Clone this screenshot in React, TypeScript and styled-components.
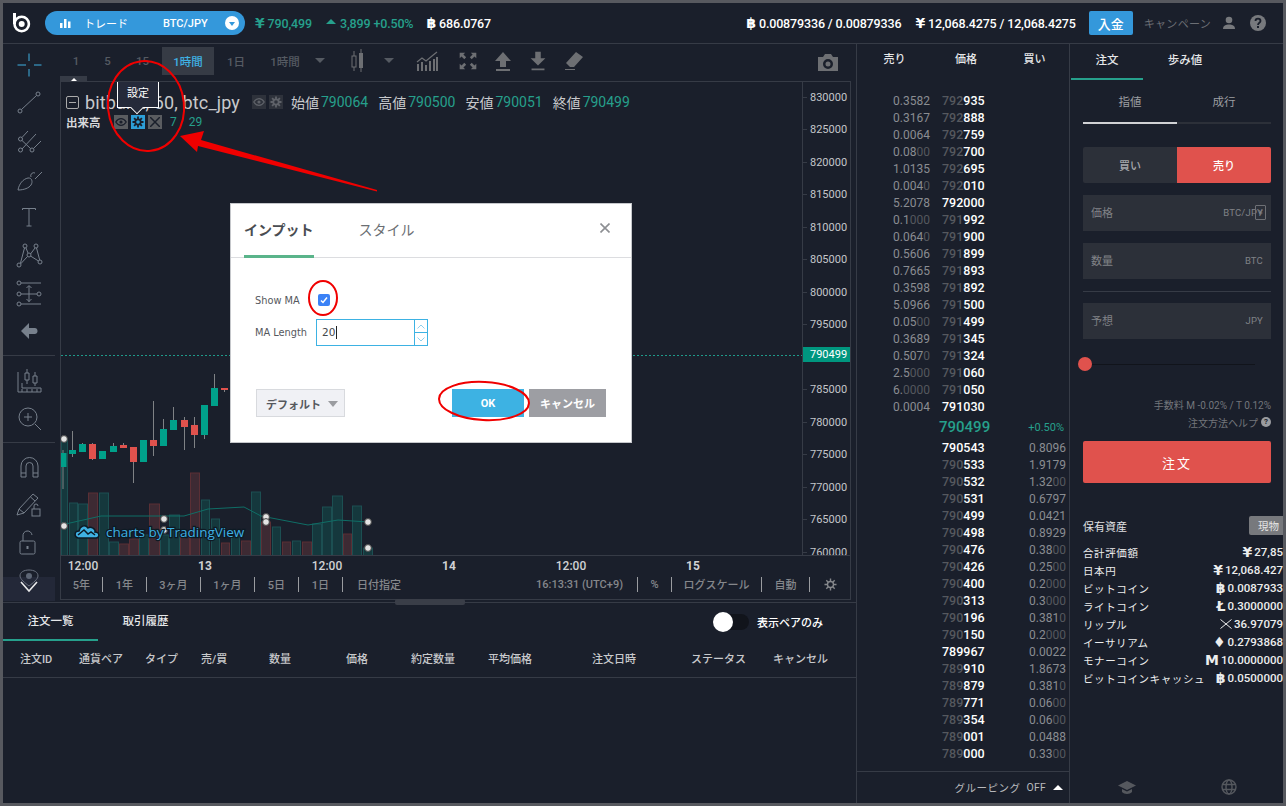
import React from 'react';
import styled, { createGlobalStyle } from 'styled-components';

const GREEN = '#26a08c';
const RED = '#e0524d';
const BLUE = '#3498db';
const LINE = '#363b46';
const BG = '#1a1f2b';
const ICON = '#77808c';

const GlobalStyle = createGlobalStyle`
  html, body {
    margin: 0;
    padding: 0;
    background: ${BG};
  }
  * {
    box-sizing: border-box;
  }
  body {
    font-family: Roboto, "Noto Sans CJK JP", sans-serif;
    color: #fff;
  }
`;

const Frame = styled.div`
  position: relative;
  width: 1286px;
  height: 806px;
  border: 3px solid #57595f;
  background: ${BG};
  overflow: hidden;
`;

/* header */
const Header = styled.header`
  height: 41px;
  border-bottom: 1px solid ${LINE};
  display: flex;
  align-items: center;
  padding-left: 8px;
`;

const Logo = styled.svg`
  width: 22px;
  height: 24px;
  margin-right: 12px;
  flex: none;
`;

const Pill = styled.div`
  width: 200px;
  height: 24px;
  border-radius: 12px;
  background: ${BLUE};
  display: flex;
  align-items: center;
  padding: 0 6px 0 14px;
  font-size: 11px;
  color: #fff;
`;

const PillLabel = styled.span`
  margin-left: 13px;
  width: 79px;
`;

const PillPair = styled.span`
  flex: 1;
  font-size: 11px;
  font-weight: 500;
`;

const PillArrow = styled.span`
  width: 14px;
  height: 14px;
  border-radius: 50%;
  background: #fff;
  display: flex;
  align-items: center;
  justify-content: center;
  &::after {
    content: '';
    border: 3.5px solid transparent;
    border-top: 4px solid ${BLUE};
    margin-top: 4px;
  }
`;

const Stat = styled.span<{ $color?: string; $left: number }>`
  margin-left: ${(p) => p.$left}px;
  font-size: 12.5px;
  letter-spacing: -0.15px;
  font-weight: 500;
  color: ${(p) => p.$color || '#fff'};
  white-space: nowrap;
  display: inline-flex;
  align-items: center;
  gap: 3px;
`;

const Coin = styled.span`
  font-family: "DejaVu Sans", sans-serif;
  font-weight: 700;
  font-size: 14px;
  line-height: 1;
`;

const UpArrow = styled.span`
  border: 5px solid transparent;
  border-bottom: 5px solid ${GREEN};
  border-top: 0;
  margin-right: 1px;
  margin-top: -3px;
`;

const HeaderRight = styled.div`
  margin-left: auto;
  display: flex;
  align-items: center;
  padding-right: 17px;
`;

const DepositButton = styled.button`
  width: 44px;
  height: 24px;
  margin-left: 13px;
  border: 0;
  border-radius: 2px;
  background: ${BLUE};
  color: #fff;
  font: 500 13px Roboto, "Noto Sans CJK JP", sans-serif;
  padding: 0;
`;

const Campaign = styled.span`
  margin-left: 11px;
  font-size: 11px;
  letter-spacing: 0.3px;
  color: #6b6e74;
`;

const HeadIcon = styled.svg<{ $left: number }>`
  margin-left: ${(p) => p.$left}px;
  width: 16px;
  height: 16px;
  flex: none;
`;

/* page body */
const Body = styled.div`
  display: flex;
  height: 759px;
`;

const LeftPane = styled.div`
  width: 853px;
  flex: none;
  display: flex;
  flex-direction: column;
`;

const ChartArea = styled.section`
  height: 559px;
  flex: none;
  display: flex;
  border-bottom: 1px solid ${LINE};
`;

const Rail = styled.nav`
  width: 57px;
  flex: none;
  display: flex;
  flex-direction: column;
  padding-top: 2px;
`;

const RailGroup = styled.div`
  width: 52px;
  padding-bottom: 5px;
  border-bottom: 1px solid ${LINE};
  margin-bottom: 5px;
  &:nth-of-type(3) {
    border-bottom: 0;
    margin-bottom: 0;
    padding-bottom: 0;
  }
`;

const RailItem = styled.div`
  height: 38px;
  display: flex;
  align-items: center;
  justify-content: center;
`;

const RailFoot = styled.div`
  width: 52px;
  height: 24px;
  margin-top: auto;
  margin-bottom: 1px;
  background: #232838;
  display: flex;
  justify-content: center;
  position: relative;
`;

const RailSvg = styled.svg`
  width: 28px;
  height: 28px;
  fill: none;
  stroke: ${ICON};
  stroke-width: 1;
  overflow: visible;
`;

const FootSvg = styled(RailSvg)`
  margin-top: -8px;
`;

const ChartColumn = styled.div`
  width: 791px;
  flex: none;
  display: flex;
  flex-direction: column;
  height: 556px;
`;

const Toolbar = styled.div`
  height: 37px;
  flex: none;
  display: flex;
  align-items: center;
`;

const ToolCell = styled.div<{ $w: number; $active?: boolean }>`
  width: ${(p) => p.$w}px;
  height: 28px;
  margin-top: -4px;
  flex: none;
  display: flex;
  align-items: center;
  justify-content: center;
  font-size: 11.5px;
  font-weight: 500;
  color: ${(p) => (p.$active ? '#3fb1e3' : '#555a62')};
  background: ${(p) => (p.$active ? '#363b45' : 'transparent')};
`;

const Caret = styled.span`
  border: 5px solid transparent;
  border-top: 5px solid #555a62;
  border-bottom: 0;
`;

const ToolSvg = styled.svg`
  width: 26px;
  height: 26px;
  fill: #6d6f73;
`;

const CameraSvg = styled(ToolSvg)`
  margin-top: -2px;
`;

const ChartBox = styled.div`
  position: relative;
  flex: 1;
  display: flex;
  flex-direction: column;
  border: 1px solid ${LINE};
`;

const ChartTop = styled.div`
  height: 474px;
  flex: none;
  display: flex;
  border-bottom: 1px solid ${LINE};
`;

const Plot = styled.div`
  position: relative;
  width: 741px;
  flex: none;
  overflow: hidden;
`;

const PlotSvg = styled.svg`
  display: block;
  width: 741px;
  height: 474px;
`;

const WatermarkText = styled.text`
  font-family: "Open Sans", sans-serif;
  font-size: 13.5px;
  fill: #3fb1e3;
  stroke: #0d1a24;
  stroke-width: 2.5px;
  paint-order: stroke;
`;

const PriceAxis = styled.div`
  flex: 1;
  position: relative;
  border-left: 1px solid ${LINE};
  overflow: hidden;
  margin-top: -1px;
`;

const PriceRow = styled.div`
  height: 32.5px;
  display: flex;
  align-items: center;
  padding-left: 7px;
  font-size: 11px;
  color: #c4c6ca;
  &::before {
    content: '';
    width: 4px;
    height: 1px;
    background: ${LINE};
    margin-left: -7px;
    margin-right: 3px;
  }
`;

const LastTag = styled.div`
  position: absolute;
  left: 0;
  top: 266px;
  width: 48px;
  height: 15px;
  background: #00967f;
  color: #fff;
  font-size: 11px;
  line-height: 15px;
  padding-left: 7px;
`;

const CornerTab = styled.div`
  position: absolute;
  left: -1px;
  top: -6px;
  width: 27px;
  height: 5px;
  background: ${LINE};
  display: flex;
  justify-content: center;
  &::after {
    content: '';
    border: 3px solid transparent;
    border-bottom: 3px solid #fff;
    border-top: 0;
    margin-top: 1px;
  }
`;

const Legend = styled.div`
  position: absolute;
  left: 5px;
  top: 8px;
`;

const LegendRow = styled.div`
  display: flex;
  align-items: center;
  height: 24px;
  font-size: 18px;
  letter-spacing: 0.15px;
  color: #c8c9cc;
  white-space: nowrap;
`;

const Collapse = styled.span`
  width: 13px;
  height: 13px;
  border: 1px solid #aaa;
  border-radius: 2px;
  margin-right: 6px;
  display: flex;
  align-items: center;
  justify-content: center;
  &::after {
    content: '';
    width: 7px;
    height: 1px;
    background: #aaa;
  }
`;

const Ohlc = styled.span<{ $left?: number }>`
  margin-left: ${(p) => p.$left ?? 10}px;
  font-size: 14px;
  letter-spacing: 0;
`;

const OhlcValue = styled.span`
  color: ${GREEN};
  font-size: 14px;
  letter-spacing: 0;
  margin-left: 2px;
`;

const VolumeRow = styled.div`
  display: flex;
  align-items: center;
  height: 16px;
`;

const VolumeName = styled.span`
  font-size: 11.5px;
  font-weight: 700;
  color: #d8d9db;
  width: 48px;
`;

const LegendButton = styled.span<{ $bg: string; $left?: number }>`
  width: 14px;
  height: 14px;
  margin-left: ${(p) => p.$left ?? 0}px;
  margin-right: 3px;
  background: ${(p) => p.$bg};
  display: inline-flex;
  align-items: center;
  justify-content: center;
`;

const VolumeValue = styled.span<{ $left: number }>`
  color: ${GREEN};
  font-size: 12px;
  margin-left: ${(p) => p.$left}px;
`;

const Tooltip = styled.div`
  position: absolute;
  left: 51px;
  top: -14px;
  width: 42px;
  height: 32px;
  background: #252a3a;
  border: 1px solid #fff;
  font-size: 11px;
  display: flex;
  align-items: center;
  justify-content: center;
  &::after {
    content: '';
    position: absolute;
    left: 14px;
    bottom: -6px;
    width: 9px;
    height: 9px;
    background: #252a3a;
    border-right: 1px solid #fff;
    border-bottom: 1px solid #fff;
    transform: rotate(45deg) scale(0.9);
  }
`;

const TimeAxis = styled.div`
  height: 19px;
  flex: none;
  display: flex;
  gap: 78px;
  align-items: center;
  font-size: 12px;
  color: #d0d1d4;
`;

const TimeLabel = styled.span<{ $bold?: boolean }>`
  width: 44px;
  text-align: center;
  font-weight: ${(p) => (p.$bold ? 700 : 500)};
`;

const RangeBar = styled.div`
  flex: 1;
  display: flex;
  align-items: center;
  font-size: 11px;
  font-weight: 500;
  color: #85878b;
  padding-bottom: 6px;
`;

const RangeItem = styled.span<{ $w: number; $end?: boolean }>`
  width: ${(p) => p.$w}px;
  height: 15px;
  flex: none;
  display: flex;
  align-items: center;
  justify-content: center;
  border-right: ${(p) => (p.$end ? '0' : '1px solid #9a9ca0')};
  white-space: nowrap;
`;

const RangeSpacer = styled.span`
  flex: 1;
`;

/* orders */
const Orders = styled.section`
  position: relative;
  flex: 1;
`;

const Handle = styled.div`
  position: absolute;
  left: 392px;
  top: -4px;
  width: 70px;
  height: 6px;
  border-radius: 2px;
  background: #3a3e48;
`;

const OrdersTabs = styled.div`
  height: 38px;
  display: flex;
  align-items: stretch;
`;

const TabItem = styled.div<{ $w: number; $active?: boolean; $pad?: number }>`
  width: ${(p) => p.$w}px;
  display: flex;
  align-items: center;
  justify-content: center;
  font-size: 11.5px;
  font-weight: 500;
  color: #e6e7e9;
  padding-bottom: ${(p) => p.$pad ?? 2}px;
  border-bottom: 2px solid ${(p) => (p.$active ? GREEN : 'transparent')};
`;

const PairToggle = styled.div`
  margin-left: auto;
  display: flex;
  align-items: center;
  padding-right: 33px;
  font-size: 11px;
  font-weight: 500;
  gap: 8px;
`;

const ToggleTrack = styled.span`
  position: relative;
  width: 26px;
  height: 16px;
  margin-left: 10px;
  border-radius: 8px;
  background: #11141b;
  &::before {
    content: '';
    position: absolute;
    left: -10px;
    top: -2px;
    width: 20px;
    height: 20px;
    border-radius: 50%;
    background: #fff;
  }
`;

const OrdersHead = styled.div`
  height: 37px;
  display: grid;
  grid-template-columns: 59px 66px 56px 68px 77px 65px 77px 104px 99px 82px 1fr;
  align-items: center;
  padding: 0 0 2px 17px;
  border-bottom: 1px solid ${LINE};
  font-size: 11px;
  font-weight: 500;
  color: #c8c9cc;
`;

/* order book */
const Book = styled.section`
  width: 214px;
  flex: none;
  display: flex;
  flex-direction: column;
  border-left: 1px solid ${LINE};
  border-right: 1px solid ${LINE};
`;

const BookHead = styled.div`
  height: 30px;
  flex: none;
  display: grid;
  grid-template-columns: 75px 68px 1fr;
  align-items: center;
  padding-bottom: 2px;
  font-size: 11px;
  font-weight: 500;
  color: #e6e7e9;
`;

const BookHeadCell = styled.span`
  text-align: center;
`;

const BookList = styled.div`
  padding-top: 18px;
`;

const BookRow = styled.div`
  height: 17px;
  display: grid;
  grid-template-columns: 73px 54px 1fr;
  align-items: center;
  font-size: 12px;
  font-weight: 400;
`;

const Qty = styled.span<{ $right?: boolean }>`
  text-align: right;
  color: #8a8d92;
  padding-right: ${(p) => (p.$right ? 3 : 0)}px;
  grid-column: ${(p) => (p.$right ? 3 : 1)};
`;

const Dim = styled.span`
  color: #55585e;
`;

const Price = styled.span`
  grid-column: 2;
  padding-left: 12px;
  font-size: 12.5px;
  font-weight: 500;
  color: #fff;
`;

const LastRow = styled.div`
  height: 24px;
  display: grid;
  grid-template-columns: 70px 74px 1fr;
  align-items: center;
  color: ${GREEN};
`;

const LastPrice = styled.span`
  grid-column: 2;
  padding-left: 12px;
  font-size: 15px;
  font-weight: 500;
`;

const LastChange = styled.span`
  font-size: 11px;
  text-align: right;
  padding-right: 5px;
`;

const BookFoot = styled.div`
  margin-top: auto;
  height: 32px;
  border-top: 1px solid ${LINE};
  display: flex;
  align-items: center;
  justify-content: flex-end;
  padding-right: 6px;
  font-size: 10.5px;
  letter-spacing: 0.2px;
  color: #b8b9bc;
  gap: 7px;
`;

const GroupingLabel = styled.span`
  letter-spacing: 0.5px;
  margin-right: -1px;
`;

const FootArrow = styled.span`
  border: 5px solid transparent;
  border-bottom: 5px solid #fff;
  border-top: 0;
`;

/* order form */
const Side = styled.aside`
  flex: 1;
  display: flex;
  flex-direction: column;
  min-width: 0;
  overflow: hidden;
`;

const SideTabs = styled.div`
  height: 36px;
  flex: none;
  display: flex;
  padding-left: 1px;
`;

const SideForm = styled.div`
  padding: 0 12px 0 13px;
  display: flex;
  flex-direction: column;
`;

const SubTabs = styled.div`
  height: 44px;
  display: flex;
`;

const SubTab = styled.div<{ $active?: boolean }>`
  flex: 1;
  display: flex;
  align-items: center;
  justify-content: center;
  font-size: 11.5px;
  color: #9c9ea2;
  border-bottom: 2px solid ${(p) => (p.$active ? '#d0d1d4' : '#2c3039')};
`;

const SideSwitch = styled.div`
  margin-top: 23px;
  height: 36px;
  display: flex;
  border-radius: 2px;
  overflow: hidden;
`;

const SideButton = styled.div<{ $sell?: boolean }>`
  flex: 1;
  display: flex;
  align-items: center;
  justify-content: center;
  font-size: 11px;
  font-weight: 500;
  background: ${(p) => (p.$sell ? RED : '#2c3039')};
  color: ${(p) => (p.$sell ? '#fff' : '#a6a8ac')};
`;

const Field = styled.div<{ $top: number }>`
  position: relative;
  margin-top: ${(p) => p.$top}px;
  height: 36px;
  background: #2c3039;
  display: flex;
  align-items: center;
  justify-content: space-between;
  padding: 0 8px 2px;
  font-size: 11px;
  color: #808287;
`;

const FieldUnit = styled.span`
  font-size: 9.5px;
  letter-spacing: 0.2px;
`;

const SpinBadge = styled.span`
  position: absolute;
  right: 5px;
  top: 10px;
  width: 11px;
  height: 15px;
  border: 1px solid #6e7075;
  border-radius: 1px;
  font-size: 8px;
  line-height: 13px;
  text-align: center;
`;

const Rule = styled.div`
  margin-top: 12px;
  height: 1px;
  background: ${LINE};
`;

const Slider = styled.div`
  position: relative;
  margin-top: 25px;
  height: 1px;
  width: 172px;
  background: #11141b;
  &::before {
    content: '';
    position: absolute;
    left: -5px;
    top: -7px;
    width: 14px;
    height: 14px;
    border-radius: 50%;
    background: ${RED};
  }
`;

const FeeNote = styled.div<{ $top: number }>`
  margin-top: ${(p) => p.$top}px;
  height: 18px;
  display: flex;
  align-items: center;
  justify-content: flex-end;
  gap: 3px;
  font-size: 10px;
  color: #73767b;
`;

const HelpBadge = styled.span`
  width: 10px;
  height: 10px;
  border-radius: 50%;
  background: #9a9ca0;
  color: ${BG};
  font-size: 8px;
  font-weight: 700;
  line-height: 10px;
  text-align: center;
`;

const OrderButton = styled.div`
  margin-top: 10px;
  height: 42px;
  background: ${RED};
  border-radius: 2px;
  display: flex;
  align-items: center;
  justify-content: center;
  font-size: 13px;
  letter-spacing: 2px;
`;

const Assets = styled.div`
  margin-top: 33px;
  padding-left: 13px;
`;

const AssetsHead = styled.div`
  height: 19px;
  display: flex;
  align-items: center;
  justify-content: space-between;
  font-size: 11px;
  margin-bottom: 8px;
  color: #e0e1e3;
`;

const SpotTag = styled.span`
  width: 34px;
  height: 19px;
  border-radius: 2px 0 0 2px;
  background: #77797d;
  font-size: 10.5px;
  display: flex;
  align-items: center;
  justify-content: flex-end;
  padding-right: 4px;
  color: #e6e6e6;
`;

const AssetRow = styled.div`
  height: 18px;
  display: flex;
  align-items: center;
  justify-content: space-between;
  font-size: 10.5px;
  color: #eceded;
  white-space: nowrap;
  letter-spacing: 0.6px;
`;

const AssetValue = styled.span`
  font-size: 11.5px;
  font-weight: 500;
  letter-spacing: 0;
  display: inline-flex;
  align-items: center;
  gap: 2px;
`;

const SideFoot = styled.div`
  margin-top: auto;
  height: 32px;
  display: flex;
  align-items: center;
  justify-content: space-around;
  padding: 0 4px 0 6px;
`;

/* dialog */
const Dialog = styled.div`
  position: absolute;
  left: 227px;
  top: 200px;
  width: 402px;
  height: 240px;
  background: #fff;
  border: 1px solid #c5c7cb;
  color: #4a4d52;
  display: flex;
  flex-direction: column;
  font-family: "DejaVu Sans", "Noto Sans CJK JP", sans-serif;
`;

const DialogHead = styled.div`
  position: relative;
  height: 54px;
  flex: none;
  border-bottom: 1px solid #dcdde0;
  display: flex;
  padding-left: 13px;
  gap: 45px;
`;

const DialogTab = styled.div<{ $active?: boolean }>`
  height: 54px;
  display: flex;
  align-items: center;
  font-size: 14px;
  font-weight: ${(p) => (p.$active ? 700 : 400)};
  padding-bottom: 2px;
  color: ${(p) => (p.$active ? '#4a4d52' : '#6b6e73')};
  border-bottom: 3px solid ${(p) => (p.$active ? '#5ab48a' : 'transparent')};
`;

const DialogClose = styled.svg`
  position: absolute;
  right: 21px;
  top: 19px;
  width: 10px;
  height: 10px;
  stroke: #8d8f93;
  stroke-width: 1.6;
`;

const DialogBody = styled.div`
  flex: 1;
  padding: 26px 0 0 24px;
  font-size: 9.8px;
`;

const FormRow = styled.div`
  height: 32px;
  display: flex;
  align-items: center;
`;

const FormLabel = styled.span<{ $w: number }>`
  width: ${(p) => p.$w}px;
  flex: none;
  color: #55585d;
`;

const CheckBox = styled.span`
  width: 12px;
  height: 12px;
  border-radius: 2px;
  background: #3b82f6;
  display: flex;
  align-items: center;
  justify-content: center;
`;

const NumberBox = styled.div`
  width: 112px;
  height: 27px;
  border: 1px solid #3db2e3;
  display: flex;
  margin-top: 1px;
`;

const NumberValue = styled.span`
  flex: 1;
  padding-left: 5px;
  line-height: 25px;
  font-size: 10.5px;
  color: #44474c;
  &::after {
    content: '';
    display: inline-block;
    width: 1px;
    height: 13px;
    margin-left: 1px;
    background: #222;
    vertical-align: -3px;
  }
`;

const Spinner = styled.span`
  width: 13px;
  border-left: 1px solid #3db2e3;
  display: flex;
  flex-direction: column;
`;

const SpinButton = styled.span`
  flex: 1;
  display: flex;
  align-items: center;
  justify-content: center;
  &:first-child {
    border-bottom: 1px solid #3db2e3;
  }
`;

const DialogFoot = styled.div`
  height: 53px;
  flex: none;
  padding: 0 25px 25px 25px;
  display: flex;
  gap: 5px;
`;

const DefaultButton = styled.div`
  width: 89px;
  height: 28px;
  margin-right: auto;
  border: 1px solid #d8dade;
  background: #f0f1f5;
  display: flex;
  align-items: center;
  justify-content: center;
  gap: 7px;
  padding: 2px 0 0 3px;
  font-size: 11px;
  font-weight: 700;
  color: #55585d;
  font-family: "Noto Sans CJK JP", sans-serif;
`;

const DefaultCaret = styled.span`
  border: 5px solid transparent;
  border-top: 6px solid #9a9ca0;
  border-bottom: 0;
`;

const DialogButton = styled.div<{ $bg: string; $w: number }>`
  width: ${(p) => p.$w}px;
  height: 28px;
  background: ${(p) => p.$bg};
  color: #fff;
  font-size: 11px;
  font-weight: 700;
  display: flex;
  align-items: center;
  justify-content: center;
  font-family: Roboto, "Noto Sans CJK JP", sans-serif;
`;

const Annotations = styled.svg`
  position: absolute;
  left: -3px;
  top: -3px;
  width: 1286px;
  height: 806px;
  pointer-events: none;
`;

/* data */
const PRICES = [
  '830000', '825000', '820000', '815000', '810000', '805000', '800000', '795000', '',
  '785000', '780000', '775000', '770000', '765000', '760000',
];

const ASKS: [string, string, boolean?][] = [
  ['0.3582', '792935'], ['0.3167', '792888'], ['0.0064', '792759'], ['0.0800', '792700'],
  ['1.0135', '792695'], ['0.0040', '792010'], ['5.2078', '792000', true], ['0.1000', '791992'],
  ['0.0640', '791900'], ['0.5606', '791899'], ['0.7665', '791893'], ['0.3598', '791892'],
  ['5.0966', '791500'], ['0.0500', '791499'], ['0.3689', '791345'], ['0.5070', '791324'],
  ['2.5000', '791060'], ['6.0000', '791050'], ['0.0004', '791030', true],
];

const BIDS: [string, string, boolean?][] = [
  ['0.8096', '790543', true], ['1.9179', '790533'], ['1.3200', '790532'], ['0.6797', '790531'],
  ['0.0421', '790499'], ['0.8929', '790498'], ['0.3800', '790476'], ['0.2500', '790426'],
  ['0.2000', '790400'], ['0.3000', '790313'], ['0.3810', '790196'], ['0.2000', '790150'],
  ['0.0022', '789967', true], ['1.8673', '789910'], ['0.3810', '789879'], ['0.0600', '789771'],
  ['0.0600', '789354'], ['0.0488', '789001'], ['0.3300', '789000'],
];

const ORDER_COLUMNS = [
  '注文ID', '通貨ペア', 'タイプ', '売/買', '数量', '価格', '約定数量', '平均価格', '注文日時',
  'ステータス', 'キャンセル',
];

const RippleGlyph = () => (
  <svg width="12" height="10" viewBox="0 0 12 10" fill="none" stroke="#eceded" strokeWidth="1">
    <path d="M0.5 0.5L11.5 9.5M11.5 0.5L0.5 9.5" />
  </svg>
);

const ASSETS: [string, React.ReactNode, string][] = [
  ['合計評価額', '¥', '27,85'],
  ['日本円', '¥', '12,068.427'],
  ['ビットコイン', '฿', '0.0087933'],
  ['ライトコイン', 'Ł', '0.3000000'],
  ['リップル', <RippleGlyph />, '36.97079'],
  ['イーサリアム', '♦', '0.2793868'],
  ['モナーコイン', 'M', '10.0000000'],
  ['ビットコインキャッシュ', '฿', '0.0500000'],
];

// [center x, wick top, wick bottom, body top, body bottom, up]
const CANDLES: [number, number, number, number, number, boolean][] = [
  [2, 448, 487, 451, 465, true],
  [11.5, 429, 455, 448, 452, true],
  [21.5, 441, 450, 442, 450, true],
  [31.5, 441, 458, 442, 457, false],
  [41.5, 449, 457, 449, 457, true],
  [52.5, 441, 450, 444, 450, true],
  [62.5, 441, 446, 443, 446, false],
  [72.5, 445, 481, 445, 460, false],
  [82.5, 438, 460, 438, 460, true],
  [92.5, 399, 454, 438, 444, false],
  [102.5, 417, 444, 427, 444, true],
  [112.5, 405, 428, 418, 428, true],
  [123.5, 415, 448, 418, 425, false],
  [133.5, 415, 446, 423, 433, false],
  [143.5, 403, 437, 403, 433, true],
  [153.5, 372, 404, 386, 404, true],
  [163.5, 386, 390, 386, 388, false],
];

// [left, right, top, up]
const VOLUMES: [number, number, number, boolean][] = [
  [0, 7, 437, true], [8, 17, 501, true], [17, 27, 502, true], [27, 37, 491, false],
  [38, 48, 491, true], [48, 58, 540, true], [58, 68, 542, false], [68, 78, 537, false],
  [78, 88, 533, true], [88, 99, 502, false], [99, 108, 533, true], [108, 119, 513, true],
  [119, 129, 533, false], [129, 139, 471, false], [140, 149, 498, true], [150, 159, 517, true],
  [160, 169, 541, false], [170, 179, 533, true], [180, 190, 539, false], [190, 200, 490, true],
  [200, 210, 520, false], [211, 220, 525, true], [221, 230, 540, false], [231, 240, 539, true],
  [241, 251, 540, false], [251, 261, 522, true], [261, 271, 505, true], [271, 282, 494, true],
  [282, 291, 532, false], [291, 301, 504, true], [302, 312, 546, true],
];

const MA_LINE = '0,523 40,514 90,514 123,514 147,507 183,505 200,514 247,523 277,518 307,520';
const HANDLES: [number, number][] = [
  [3, 437], [3, 524], [103, 517], [103, 528], [205, 515], [205, 520], [307, 520], [307, 546],
];

const splitQty = (qty: string) => {
  const m = qty.match(/^(.*?[1-9.])(0*)$/);
  return m ? [m[1], m[2]] : [qty, ''];
};

const QtyCell = ({ value, right }: { value: string; right?: boolean }) => {
  const [head, tail] = splitQty(value);
  return (
    <Qty $right={right}>
      {head}
      <Dim>{tail}</Dim>
    </Qty>
  );
};

const PriceCell = ({ value, full }: { value: string; full?: boolean }) =>
  full ? (
    <Price>{value}</Price>
  ) : (
    <Price>
      <Dim>{value.slice(0, 3)}</Dim>
      {value.slice(3)}
    </Price>
  );

const EyeGlyph = ({ color }: { color: string }) => (
  <svg width="12" height="12" viewBox="0 0 12 12" fill="none" stroke={color} strokeWidth="1.3">
    <path d="M0.8 6C2.2 3.7 4 2.6 6 2.6S9.8 3.7 11.2 6C9.8 8.3 8 9.4 6 9.4S2.2 8.3 0.8 6Z" />
    <circle cx="6" cy="6" r="1.6" fill={color} stroke="none" />
  </svg>
);

const GearGlyph = ({ color, hole }: { color: string; hole: string }) => (
  <svg width="12" height="12" viewBox="0 0 12 12">
    <path d="M6 0.5V11.5M0.5 6H11.5M2.1 2.1L9.9 9.9M9.9 2.1L2.1 9.9" stroke={color} strokeWidth="1.8" />
    <circle cx="6" cy="6" r="3.6" fill={color} />
    <circle cx="6" cy="6" r="1.8" fill={hole} />
  </svg>
);

const RAIL_ICONS: React.ReactNode[][] = [
  [
    <g key="cross" stroke="#3fb1e3">
      <path d="M14 2.5V10M14 18V25.5M2.5 14H11M19 14H26.5" />
    </g>,
    <g key="line">
      <circle cx="5" cy="22" r="2" />
      <circle cx="23" cy="5" r="2" />
      <path d="M6.5 20.5L21.5 6.5" />
    </g>,
    <g key="fork">
      <circle cx="5.5" cy="12" r="2" />
      <circle cx="5.5" cy="23" r="2" />
      <circle cx="17" cy="23" r="2" />
      <path d="M7 10.5L13 4M7 22L21 7M18.5 21.5L26 14M7 13.5L15.5 21.5" />
    </g>,
    <g key="brush">
      <path d="M3 25C4 19 8 14 13 13C17 12.5 18 17 16 20C14 23 9 25 3 25Z" />
      <path d="M16 12A3 3 0 0 1 20 8M20 14L27 7" />
    </g>,
    <g key="text">
      <path d="M7.5 7V5.5H20.5V7M14 5.5V23M11.5 23H16.5" />
    </g>,
    <g key="pattern">
      <circle cx="4" cy="24" r="2" />
      <circle cx="10" cy="5" r="2" />
      <circle cx="14" cy="14" r="2" />
      <circle cx="21" cy="5" r="2" />
      <circle cx="25" cy="21" r="2" />
      <path d="M5.5 22L9.5 7M5.5 23L12.5 15.5M11 7L13 12M15.5 13L20 7M15.5 15L23.5 20M21.5 7L24.7 19" />
    </g>,
    <g key="measure">
      <circle cx="4" cy="4" r="2" />
      <circle cx="4" cy="15" r="2" />
      <circle cx="4" cy="25" r="2" />
      <circle cx="24" cy="15" r="2" />
      <path d="M6 4H26M6 15H22M6 25H26M14 7V23M11.5 9L14 6.5L16.5 9M11.5 20L14 22.5L16.5 20" />
    </g>,
    <path key="back" d="M6 14L14 6V11H19C22 11 22.5 12.5 22.5 14C22.5 15.5 22 17 19 17H14V22Z" fill={ICON} stroke="none" />,
  ],
  [
    <g key="ruler">
      <path d="M3 6V26H26V22H7V17" />
      <path d="M7 26V23M12 26V23M17 26V23M22 26V23" />
      <path d="M10 7H14V14H10ZM18 10H22V17H18ZM12 3V7M12 14V18M20 6V10M20 17V20" />
    </g>,
    <g key="zoom">
      <circle cx="13" cy="13" r="9" />
      <path d="M13 9V17M9 13H17M20 20L26 26" />
    </g>,
  ],
  [
    <g key="magnet">
      <path d="M6 24V13A8.5 8.5 0 0 1 23 13V24" />
      <path d="M11 24V13A3.5 3.5 0 0 1 18 13V24" />
      <path d="M6 20H11M18 20H23M6 24H11M18 24H23" />
    </g>,
    <g key="pencil">
      <path d="M2 24L4 18L18 3L23 7L9 22Z" />
      <path d="M4 18L9 22M15.5 6L20 10" />
      <rect x="17" y="18" width="8" height="7" />
      <path d="M19 18V15A2 2 0 0 1 23 15" />
    </g>,
    <g key="lock">
      <rect x="5" y="12" width="15" height="13" rx="1.5" />
      <path d="M8 12V7A4.5 4.5 0 0 1 17 6" />
      <path d="M12.5 17V20" strokeWidth="2" />
    </g>,
  ],
];

const App = () => (
  <>
    <GlobalStyle />
    <Frame>
      <Header>
        <Logo viewBox="0 0 22 24" fill="none" stroke="#fff">
          <path d="M3.5 2V13" strokeWidth="3" />
          <circle cx="10.7" cy="13" r="7.2" strokeWidth="2.6" />
          <circle cx="10.7" cy="13" r="3" fill="#fff" stroke="none" />
        </Logo>
        <Pill>
          <svg width="12" height="12" viewBox="0 0 12 12" fill="#fff">
            <rect x="1" y="6" width="2.5" height="5" />
            <rect x="5" y="2" width="2.5" height="9" />
            <rect x="9" y="4.5" width="2.5" height="6.5" />
          </svg>
          <PillLabel>トレード</PillLabel>
          <PillPair>BTC/JPY</PillPair>
          <PillArrow />
        </Pill>
        <Stat $color={GREEN} $left={10}>
          <Coin>¥</Coin>790,499
        </Stat>
        <Stat $color={GREEN} $left={14}>
          <UpArrow />
          3,899 +0.50%
        </Stat>
        <Stat $left={13}>
          <Coin>฿</Coin>686.0767
        </Stat>
        <HeaderRight>
          <Stat $left={0}>
            <Coin>฿</Coin>0.00879336 / 0.00879336
          </Stat>
          <Stat $left={14}>
            <Coin>¥</Coin>12,068.4275 / 12,068.4275
          </Stat>
          <DepositButton>入金</DepositButton>
          <Campaign>キャンペーン</Campaign>
          <HeadIcon $left={10} viewBox="0 0 16 16" fill="#77797d">
            <circle cx="8" cy="5" r="3.3" />
            <path d="M2 14C2 10.5 5 9.5 8 9.5S14 10.5 14 14Z" />
          </HeadIcon>
          <HeadIcon $left={13} viewBox="0 0 16 16">
            <circle cx="8" cy="8" r="8" fill="#77797d" />
            <path d="M5.5 6C5.5 4.5 6.7 3.6 8 3.6S10.5 4.5 10.5 6C10.5 7.8 8 7.8 8 10" fill="none" stroke={BG} strokeWidth="1.8" />
            <rect x="7" y="11" width="2" height="2" fill={BG} />
          </HeadIcon>
        </HeaderRight>
      </Header>
      <Body>
        <LeftPane>
          <ChartArea>
            <Rail>
              {RAIL_ICONS.map((group, i) => (
                <RailGroup key={i}>
                  {group.map((icon, j) => (
                    <RailItem key={j}>
                      <RailSvg viewBox="0 0 28 28">{icon}</RailSvg>
                    </RailItem>
                  ))}
                </RailGroup>
              ))}
              <RailFoot>
                <FootSvg viewBox="0 0 28 28">
                  <path d="M5 7C5 3 9 1 14 1S23 3 23 7C23 10 18 14 14 17C10 14 5 10 5 7Z" stroke="#6b7280" />
                  <circle cx="14" cy="7" r="3" fill="#5d6675" stroke="none" />
                  <path d="M6 13L14 22L22 13" stroke="#e8e9ea" strokeWidth="1.6" />
                </FootSvg>
              </RailFoot>
            </Rail>
            <ChartColumn>
              <Toolbar>
                <ToolCell $w={32}>1</ToolCell>
                <ToolCell $w={31}>5</ToolCell>
                <ToolCell $w={39}>15</ToolCell>
                <ToolCell $w={52} $active>1時間</ToolCell>
                <ToolCell $w={44}>1日</ToolCell>
                <ToolCell $w={54}>1時間</ToolCell>
                <ToolCell $w={16}><Caret /></ToolCell>
                <ToolCell $w={8} />
                <ToolCell $w={44}>
                  <ToolSvg viewBox="0 0 26 26">
                    <path d="M9 3V23M16 1V24" stroke="#6d6f73" />
                    <rect x="7" y="8" width="4" height="11" fill={BG} stroke="#6d6f73" />
                    <rect x="14" y="5" width="4" height="15" />
                  </ToolSvg>
                </ToolCell>
                <ToolCell $w={18}><Caret /></ToolCell>
                <ToolCell $w={58}>
                  <ToolSvg viewBox="0 0 26 26">
                    <path d="M3 14L8 10L12 13L18 8L23 4" fill="none" stroke="#6d6f73" strokeWidth="1.2" />
                    <path d="M3 16h2v7H3zM7 14h2v9H7zM11 17h2v6h-2zM15 13h2v10h-2zM19 11h2v12h-2zM22 9h2v14h-2z" />
                  </ToolSvg>
                </ToolCell>
                <ToolCell $w={24}>
                  <ToolSvg viewBox="0 0 26 26">
                    <path d="M4 4h6l-2 2 3 3-2 2-3-3-2 2zM22 4v6l-2-2-3 3-2-2 3-3-2-2zM4 22v-6l2 2 3-3 2 2-3 3 2 2zM22 22h-6l2-2-3-3 2-2 3 3 2-2z" />
                  </ToolSvg>
                </ToolCell>
                <ToolCell $w={46}>
                  <ToolSvg viewBox="0 0 26 26">
                    <path d="M13 4L21 13H16V19H10V13H5ZM6 21H20V23H6Z" />
                  </ToolSvg>
                </ToolCell>
                <ToolCell $w={24}>
                  <ToolSvg viewBox="0 0 26 26">
                    <path d="M10 3H16V10H21L13 18L5 10H10ZM6 21H20V23H6Z" />
                  </ToolSvg>
                </ToolCell>
                <ToolCell $w={48}>
                  <ToolSvg viewBox="0 0 26 26">
                    <path d="M15 4L22 9L13 19H9L5 15ZM4 21H14V22H4Z" />
                  </ToolSvg>
                </ToolCell>
                <ToolCell $w={217} />
                <CameraSvg viewBox="0 0 26 26">
                  <path fillRule="evenodd" d="M3 8H8L10 5H16L18 8H23V22H3ZM13 10A5 5 0 1 0 13 20A5 5 0 1 0 13 10ZM13 12.5A2.5 2.5 0 1 1 13 17.5A2.5 2.5 0 1 1 13 12.5Z" />
                </CameraSvg>
              </Toolbar>
              <ChartBox>
                <CornerTab />
                <ChartTop>
                  <Plot>
                    <PlotSvg viewBox="0 0 741 474">
                      <g transform="translate(0 -80)">
                        <line x1="0" y1="353.5" x2="741" y2="353.5" stroke="#1f9a8a" strokeDasharray="2 2" />
                        {VOLUMES.map(([l, r, t, up], i) => (
                          <rect
                            key={i}
                            x={l + 0.5}
                            y={t}
                            width={r - l - 1}
                            height={554 - t}
                            fill={up ? '#15383d' : '#3d2a33'}
                            stroke={up ? '#1c4f52' : '#5a2f35'}
                          />
                        ))}
                        <polyline points={MA_LINE} fill="none" stroke="#0f6e66" />
                        {CANDLES.map(([x, wt, wb, bt, bb, up], i) => (
                          <g key={i}>
                            <line x1={x} y1={wt} x2={x} y2={wb} stroke="#7f8285" />
                            <rect x={x - 3.5} y={bt} width={7} height={bb - bt} fill={up ? '#00a08a' : RED} />
                          </g>
                        ))}
                        {HANDLES.map(([x, y], i) => (
                          <circle key={i} cx={x} cy={y} r={3.4} fill="#e4e4e4" stroke="#444" />
                        ))}
                      </g>
                      <g transform="translate(14 440)">
                        <path
                          d="M3 16C-1 15 -1 9 4 9C5 4 10 2 13 6C16 4 21 7 20 10C25 10 25 16 21 16Z"
                          fill="#3fb1e3"
                          stroke="#0d1a24"
                          strokeWidth="1.5"
                        />
                        <path d="M3 13L9 8L13 12L16 10L20 13" fill="none" stroke="#0d1a24" strokeWidth="1.5" />
                        <WatermarkText x="31" y="15">charts by TradingView</WatermarkText>
                      </g>
                    </PlotSvg>
                    <Legend>
                      <LegendRow>
                        <Collapse />
                        bitbank, 60, btc_jpy
                        <LegendButton $bg="#2e323b" $left={12}>
                          <EyeGlyph color="#5f6269" />
                        </LegendButton>
                        <LegendButton $bg="#2e323b">
                          <GearGlyph color="#5f6269" hole="#2e323b" />
                        </LegendButton>
                        <Ohlc $left={5}>始値</Ohlc>
                        <OhlcValue>790064</OhlcValue>
                        <Ohlc>高値</Ohlc>
                        <OhlcValue>790500</OhlcValue>
                        <Ohlc>安値</Ohlc>
                        <OhlcValue>790051</OhlcValue>
                        <Ohlc>終値</Ohlc>
                        <OhlcValue>790499</OhlcValue>
                      </LegendRow>
                      <VolumeRow>
                        <VolumeName>出来高</VolumeName>
                        <LegendButton $bg="#5a5c60">
                          <EyeGlyph color="#1a1f2b" />
                        </LegendButton>
                        <LegendButton $bg="#2d9fd8">
                          <GearGlyph color="#1a1f2b" hole="#2d9fd8" />
                        </LegendButton>
                        <LegendButton $bg="#5a5c60">
                          <svg width="10" height="10" viewBox="0 0 10 10" stroke="#1a1f2b" strokeWidth="1.5">
                            <path d="M0 0L10 10M10 0L0 10" />
                          </svg>
                        </LegendButton>
                        <VolumeValue $left={5}>7</VolumeValue>
                        <VolumeValue $left={12}>29</VolumeValue>
                      </VolumeRow>
                      <Tooltip>設定</Tooltip>
                    </Legend>
                  </Plot>
                  <PriceAxis>
                    {PRICES.map((p, i) => (
                      <PriceRow key={i}>{p}</PriceRow>
                    ))}
                    <LastTag>790499</LastTag>
                  </PriceAxis>
                </ChartTop>
                <TimeAxis>
                  <TimeLabel>12:00</TimeLabel>
                  <TimeLabel $bold>13</TimeLabel>
                  <TimeLabel>12:00</TimeLabel>
                  <TimeLabel $bold>14</TimeLabel>
                  <TimeLabel>12:00</TimeLabel>
                  <TimeLabel $bold>15</TimeLabel>
                </TimeAxis>
                <RangeBar>
                  <RangeItem $w={42}>5年</RangeItem>
                  <RangeItem $w={44}>1年</RangeItem>
                  <RangeItem $w={54}>3ヶ月</RangeItem>
                  <RangeItem $w={54}>1ヶ月</RangeItem>
                  <RangeItem $w={44}>5日</RangeItem>
                  <RangeItem $w={44}>1日</RangeItem>
                  <RangeItem $w={72} $end>日付指定</RangeItem>
                  <RangeSpacer />
                  <RangeItem $w={116}>16:13:31 (UTC+9)</RangeItem>
                  <RangeItem $w={34}>%</RangeItem>
                  <RangeItem $w={90}>ログスケール</RangeItem>
                  <RangeItem $w={48}>自動</RangeItem>
                  <RangeItem $w={40} $end>
                    <svg width="13" height="13" viewBox="0 0 13 13" fill="none" stroke="#85878b" strokeWidth="1.4">
                      <circle cx="6.5" cy="6.5" r="3" />
                      <path d="M6.5 0.5V3M6.5 10V12.5M0.5 6.5H3M10 6.5H12.5M2.3 2.3L4.2 4.2M8.8 8.8L10.7 10.7M10.7 2.3L8.8 4.2M4.2 8.8L2.3 10.7" />
                    </svg>
                  </RangeItem>
                </RangeBar>
              </ChartBox>
            </ChartColumn>
          </ChartArea>
          <Orders>
            <Handle />
            <OrdersTabs>
              <TabItem $w={95} $active>注文一覧</TabItem>
              <TabItem $w={95}>取引履歴</TabItem>
              <PairToggle>
                <ToggleTrack />
                表示ペアのみ
              </PairToggle>
            </OrdersTabs>
            <OrdersHead>
              {ORDER_COLUMNS.map((c) => (
                <span key={c}>{c}</span>
              ))}
            </OrdersHead>
          </Orders>
        </LeftPane>
        <Book>
          <BookHead>
            <BookHeadCell>売り</BookHeadCell>
            <BookHeadCell>価格</BookHeadCell>
            <BookHeadCell>買い</BookHeadCell>
          </BookHead>
          <BookList>
            {ASKS.map(([q, p, full]) => (
              <BookRow key={p}>
                <QtyCell value={q} />
                <PriceCell value={p} full={full} />
              </BookRow>
            ))}
            <LastRow>
              <LastPrice>790499</LastPrice>
              <LastChange>+0.50%</LastChange>
            </LastRow>
            {BIDS.map(([q, p, full]) => (
              <BookRow key={p}>
                <PriceCell value={p} full={full} />
                <QtyCell value={q} right />
              </BookRow>
            ))}
          </BookList>
          <BookFoot>
            <GroupingLabel>グルーピング</GroupingLabel>
            OFF
            <FootArrow />
          </BookFoot>
        </Book>
        <Side>
          <SideTabs>
            <TabItem $w={72} $active $pad={5}>注文</TabItem>
            <TabItem $w={84} $pad={5}>歩み値</TabItem>
          </SideTabs>
          <SideForm>
            <SubTabs>
              <SubTab $active>指値</SubTab>
              <SubTab>成行</SubTab>
            </SubTabs>
            <SideSwitch>
              <SideButton>買い</SideButton>
              <SideButton $sell>売り</SideButton>
            </SideSwitch>
            <Field $top={12}>
              価格
              <FieldUnit>BTC/JPY</FieldUnit>
              <SpinBadge>¥</SpinBadge>
            </Field>
            <Field $top={12}>
              数量
              <FieldUnit>BTC</FieldUnit>
            </Field>
            <Rule />
            <Field $top={11}>
              予想
              <FieldUnit>JPY</FieldUnit>
            </Field>
            <Slider />
            <FeeNote $top={30}>手数料 M -0.02% / T 0.12%</FeeNote>
            <FeeNote $top={0}>
              注文方法ヘルプ <HelpBadge>?</HelpBadge>
            </FeeNote>
            <OrderButton>注文</OrderButton>
          </SideForm>
          <Assets>
            <AssetsHead>
              保有資産
              <SpotTag>現物</SpotTag>
            </AssetsHead>
            {ASSETS.map(([name, coin, value]) => (
              <AssetRow key={name}>
                {name}
                <AssetValue>
                  <Coin>{coin}</Coin>
                  {value}
                </AssetValue>
              </AssetRow>
            ))}
          </Assets>
          <SideFoot>
            <svg width="18" height="16" viewBox="0 0 18 16" fill="#55585e">
              <path d="M9 2L18 6.5L9 11L0 6.5Z" />
              <path d="M4 10V13C6 15.5 12 15.5 14 13V10L9 12.5Z" />
            </svg>
            <svg width="16" height="16" viewBox="0 0 16 16" fill="none" stroke="#55585e" strokeWidth="1.4">
              <circle cx="8" cy="8" r="7" />
              <ellipse cx="8" cy="8" rx="3" ry="7" />
              <path d="M1.5 5.5H14.5M1.5 10.5H14.5" />
            </svg>
          </SideFoot>
        </Side>
      </Body>

      <Dialog>
        <DialogHead>
          <DialogTab $active>インプット</DialogTab>
          <DialogTab>スタイル</DialogTab>
          <DialogClose viewBox="0 0 10 10">
            <path d="M0.5 0.5L9.5 9.5M9.5 0.5L0.5 9.5" />
          </DialogClose>
        </DialogHead>
        <DialogBody>
          <FormRow>
            <FormLabel $w={63}>Show MA</FormLabel>
            <CheckBox>
              <svg width="8" height="8" viewBox="0 0 8 8" fill="none" stroke="#fff" strokeWidth="1.5">
                <path d="M1 4.5L3 6.5L7 1.5" />
              </svg>
            </CheckBox>
          </FormRow>
          <FormRow>
            <FormLabel $w={61}>MA Length</FormLabel>
            <NumberBox>
              <NumberValue>20</NumberValue>
              <Spinner>
                <SpinButton>
                  <svg width="8" height="5" viewBox="0 0 8 5" fill="none" stroke="#8fd0ec">
                    <path d="M0.5 4.5L4 1L7.5 4.5" />
                  </svg>
                </SpinButton>
                <SpinButton>
                  <svg width="8" height="5" viewBox="0 0 8 5" fill="none" stroke="#8fd0ec">
                    <path d="M0.5 0.5L4 4L7.5 0.5" />
                  </svg>
                </SpinButton>
              </Spinner>
            </NumberBox>
          </FormRow>
        </DialogBody>
        <DialogFoot>
          <DefaultButton>
            デフォルト
            <DefaultCaret />
          </DefaultButton>
          <DialogButton $bg="#3db2e3" $w={72}>OK</DialogButton>
          <DialogButton $bg="#9d9ea3" $w={77}>キャンセル</DialogButton>
        </DialogFoot>
      </Dialog>

      <Annotations viewBox="0 0 1286 806">
        <g fill="none" stroke="#f00000" strokeWidth="2">
          <ellipse cx="146" cy="106" rx="38" ry="45" transform="rotate(-6 146 106)" />
          <ellipse cx="323" cy="298" rx="14" ry="17" />
          <ellipse cx="484" cy="401" rx="45" ry="19" transform="rotate(3 484 401)" />
        </g>
        <polygon points="180,136 204,131 201,140 377,190 377,191.5 198,146 197,152" fill="#f00000" />
      </Annotations>
    </Frame>
  </>
);

export default App;
